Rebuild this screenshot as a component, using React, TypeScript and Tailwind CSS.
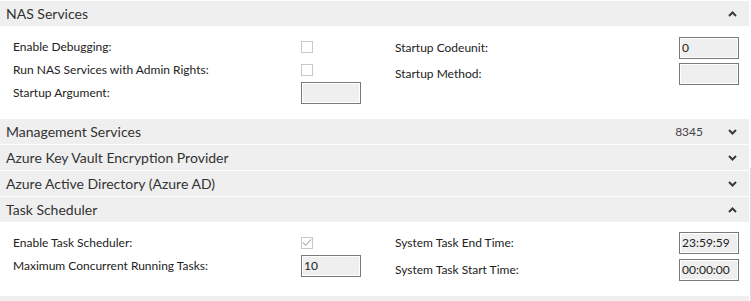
import type { ReactNode } from "react";

function Chevron({ up }: { up?: boolean }) {
  return (
    <svg width="9" height="6" viewBox="0 0 9 6" className="shrink-0">
      <path
        d={up ? "M1 5 L4.5 1.5 L8 5" : "M1 1 L4.5 4.5 L8 1"}
        fill="none"
        stroke="#3a3a3a"
        strokeWidth="2"
      />
    </svg>
  );
}

function SectionHeader({ title, value, up }: { title: string; value?: string; up?: boolean }) {
  return (
    <div className="mr-[2px] flex h-[25px] items-center bg-[#efefef] pl-[6px] pr-[12px]">
      <span className="flex-1 text-[14px] text-[#333]">{title}</span>
      {value && <span className="mr-[25px] text-[12px] text-[#444]">{value}</span>}
      <Chevron up={up} />
    </div>
  );
}

function Checkbox({ checked }: { checked?: boolean }) {
  return (
    <div className="flex h-[12px] w-[12px] items-center justify-center border border-[#c8c8c8] bg-white">
      {checked && (
        <svg width="11" height="9" viewBox="0 0 11 9">
          <path d="M1 4.5 L4 7.5 L10 1" fill="none" stroke="#b8b8b8" strokeWidth="1.3" />
        </svg>
      )}
    </div>
  );
}

function Field({ value }: { value?: string }) {
  return (
    <div className="flex h-[22px] w-[60px] items-center border border-[#7a7a7a] bg-[#efefef] pl-[2px] text-[12px] text-[#222] shadow-[inset_0_0_0_1px_#fff]">
      {value}
    </div>
  );
}

function LeftRow({ label, children }: { label: string; children: ReactNode }) {
  return (
    <div className="flex h-[23px] items-center">
      <span className="w-[288px] shrink-0 text-[12px] text-[#222]">{label}</span>
      {children}
    </div>
  );
}

function RightRow({ label, children }: { label: string; children: ReactNode }) {
  return (
    <div className="flex h-[22px] items-center">
      <span className="w-[284px] shrink-0 text-[12px] text-[#222]">{label}</span>
      {children}
    </div>
  );
}

export default function App() {
  return (
    <div
      className="relative h-[301px] w-[751px] overflow-hidden bg-white pt-[1px]"
      style={{ fontFamily: '"Segoe UI", Lato, "Noto Sans", sans-serif' }}
    >
      <SectionHeader title="NAS Services" up />
      <div className="flex h-[93px]">
        <div className="flex w-[395px] flex-col pl-[13px] pt-[9px]">
          <LeftRow label="Enable Debugging:">
            <Checkbox />
          </LeftRow>
          <LeftRow label="Run NAS Services with Admin Rights:">
            <Checkbox />
          </LeftRow>
          <LeftRow label="Startup Argument:">
            <Field />
          </LeftRow>
        </div>
        <div className="flex flex-col gap-[4px] pt-[11px]">
          <RightRow label="Startup Codeunit:">
            <Field value="0" />
          </RightRow>
          <RightRow label="Startup Method:">
            <Field />
          </RightRow>
        </div>
      </div>
      <div className="flex flex-col gap-[1px]">
        <SectionHeader title="Management Services" value="8345" />
        <SectionHeader title="Azure Key Vault Encryption Provider" />
        <SectionHeader title="Azure Active Directory (Azure AD)" />
        <SectionHeader title="Task Scheduler" up />
      </div>
      <div className="flex h-[74px]">
        <div className="flex w-[395px] flex-col pl-[13px] pt-[9px]">
          <LeftRow label="Enable Task Scheduler:">
            <Checkbox checked />
          </LeftRow>
          <LeftRow label="Maximum Concurrent Running Tasks:">
            <Field value="10" />
          </LeftRow>
        </div>
        <div className="flex flex-col gap-[5px] pt-[10px]">
          <RightRow label="System Task End Time:">
            <Field value="23:59:59" />
          </RightRow>
          <RightRow label="System Task Start Time:">
            <Field value="00:00:00" />
          </RightRow>
        </div>
      </div>
      <div className="mr-[2px] h-[5px] bg-[#efefef]" />
      <div className="absolute right-0 top-[168px] h-[133px] w-[1px] bg-[#dcdcdc]" />
    </div>
  );
}
